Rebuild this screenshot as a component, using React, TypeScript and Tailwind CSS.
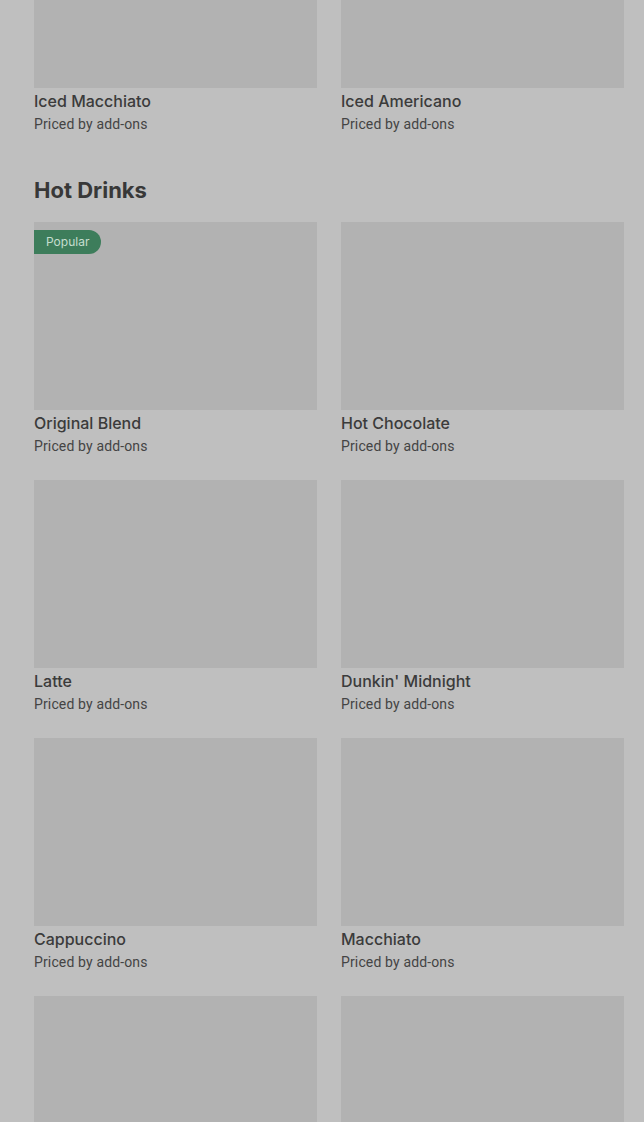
const icedDrinks = [
  { name: 'Iced Macchiato', popular: false },
  { name: 'Iced Americano', popular: false },
];

const hotDrinks = [
  { name: 'Original Blend', popular: true },
  { name: 'Hot Chocolate', popular: false },
  { name: 'Latte', popular: false },
  { name: "Dunkin' Midnight", popular: false },
  { name: 'Cappuccino', popular: false },
  { name: 'Macchiato', popular: false },
  { name: 'Espresso', popular: false },
  { name: 'Chai Latte', popular: false },
];

type Item = { name: string; popular: boolean };

function MenuCard({ item }: { item: Item }) {
  return (
    <div className="flex flex-col">
      <div className="relative h-[188px] bg-[#b2b2b2]">
        {item.popular && (
          <span className="absolute top-2 left-0 flex h-6 items-center rounded-r-full bg-[#3d7d5b] px-3 text-xs text-[#c5ddcf]">
            Popular
          </span>
        )}
      </div>
      <div className="pt-[1px] text-base leading-6 font-medium text-[#3b3b3b]">
        {item.name}
      </div>
      <div className="mt-[1px] font-['Roboto',sans-serif] text-sm leading-5 tracking-[0.01em] text-[#444444]">
        Priced by add-ons
      </div>
    </div>
  );
}

function Section({ items }: { items: Item[] }) {
  return (
    <div className="grid grid-cols-2 gap-x-6 gap-y-6">
      {items.map((item) => (
        <MenuCard key={item.name} item={item} />
      ))}
    </div>
  );
}

export default function App() {
  return (
    <div
      className="h-[1122px] overflow-hidden bg-[#bfbfbf]"
      style={{ fontFamily: 'Inter, "Noto Sans", sans-serif' }}
    >
      <div className="-mt-[100px] pr-5 pl-[34px]">
        <Section items={icedDrinks} />
        <h2 className="mt-[42px] mb-[18px] text-[22px] leading-7 font-bold tracking-normal text-[#383838]">
          Hot Drinks
        </h2>
        <Section items={hotDrinks} />
      </div>
    </div>
  );
}
